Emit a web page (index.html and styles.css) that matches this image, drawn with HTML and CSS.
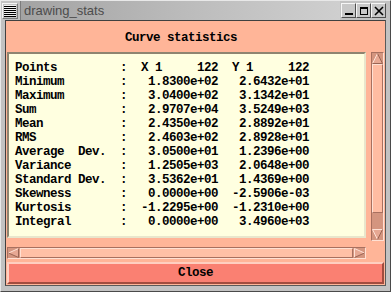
FILE: index.html
```html
<!DOCTYPE html>
<html>
<head>
<meta charset="utf-8">
<link rel="stylesheet" href="styles.css">
</head>
<body>
<div class="window">
  <div class="titlebar">
    <div class="menu-btn"></div>
    <div class="title-area"><span class="title">drawing_stats</span></div>
    <div class="wbtns">
      <div class="wbtn"><svg width="13" height="13" viewBox="0 0 13 13"><rect x="3" y="9" width="8" height="2" fill="#000"/></svg></div>
      <div class="wbtn"><svg width="13" height="13" viewBox="0 0 13 13"><rect x="3.5" y="3.5" width="7" height="7" fill="none" stroke="#000"/><rect x="3" y="3" width="8" height="2" fill="#000"/></svg></div>
      <div class="wbtn"><svg width="13" height="13" viewBox="0 0 13 13"><path d="M3 3 L11 11 M11 3 L3 11" stroke="#000" stroke-width="1.6"/></svg></div>
    </div>
  </div>
  <div class="frame">
    <div class="client">
      <div class="header">Curve statistics</div>
      <div class="mid">
<pre class="text">Points         :  X 1     122  Y 1     122
Minimum        :   1.8300e+02   2.6432e+01
Maximum        :   3.0400e+02   3.1342e+01
Sum            :   2.9707e+04   3.5249e+03
Mean           :   2.4350e+02   2.8892e+01
RMS            :   2.4603e+02   2.8928e+01
Average  Dev.  :   3.0500e+01   1.2396e+00
Variance       :   1.2505e+03   2.0648e+00
Standard Dev.  :   3.5362e+01   1.4369e+00
Skewness       :   0.0000e+00  -2.5906e-03
Kurtosis       :  -1.2295e+00  -1.2310e+00
Integral       :   0.0000e+00   3.4960e+03</pre>
        <div class="vscroll">
          <div class="arrow-v"><svg width="11" height="11" viewBox="0 0 11 11"><polygon points="5.5,0.5 0.5,10.5 10.5,10.5" fill="#e7a893"/><path d="M0.5 10.5 L5.5 0.5" stroke="#ffe2d6" fill="none"/><path d="M5.5 0.5 L10.5 10.5 L0.5 10.5" stroke="#9a6453" fill="none"/></svg></div>
          <div class="vthumb"></div>
          <div class="vspace"></div>
          <div class="arrow-v"><svg width="11" height="11" viewBox="0 0 11 11"><polygon points="0.5,0.5 10.5,0.5 5.5,10.5" fill="#e7a893"/><path d="M5.5 10.5 L0.5 0.5 L10.5 0.5" stroke="#ffe2d6" fill="none"/><path d="M10.5 0.5 L5.5 10.5" stroke="#9a6453" fill="none"/></svg></div>
        </div>
      </div>
      <div class="hscroll">
        <div class="arrow-h"><svg width="11" height="10" viewBox="0 0 11 10"><polygon points="0.5,5 10.5,0.5 10.5,9.5" fill="#e7a893"/><path d="M0.5 5 L10.5 0.5" stroke="#ffe2d6" fill="none"/><path d="M10.5 0.5 L10.5 9.5 L0.5 5" stroke="#9a6453" fill="none"/></svg></div>
        <div class="hthumb"></div>
        <div class="arrow-h"><svg width="11" height="10" viewBox="0 0 11 10"><polygon points="0.5,0.5 10.5,5 0.5,9.5" fill="#e7a893"/><path d="M0.5 9.5 L0.5 0.5 L10.5 5" stroke="#ffe2d6" fill="none"/><path d="M10.5 5 L0.5 9.5" stroke="#9a6453" fill="none"/></svg></div>
      </div>
      <div class="close-btn">Close</div>
    </div>
  </div>
</div>
</body>
</html>
```

FILE: styles.css
```css
html, body {
  margin: 0;
  padding: 0;
  background: #c2c2c2;
}

.window {
  width: 391px;
  height: 292px;
  box-sizing: border-box;
  background: #c2c2c2;
  border: 1px solid;
  border-color: #e8e8e8 #4a4a4a #4a4a4a #e8e8e8;
  display: flex;
  flex-direction: column;
}

.titlebar {
  height: 19px;
  display: flex;
  align-items: center;
  flex: none;
}

.menu-btn {
  width: 16px;
  height: 16px;
  box-sizing: border-box;
  margin-left: 1px;
  border: 1px solid;
  border-color: #f4f4f4 #7a7a7a #7a7a7a #f4f4f4;
  background: repeating-linear-gradient(to bottom, #000 0, #000 1px, #f0f0f0 1px, #f0f0f0 2px);
  background-clip: content-box;
  padding: 1px;
}

.title-area {
  flex: 1;
  height: 19px;
  margin-left: 2px;
  box-sizing: border-box;
  border-left: 1px solid #7c7c7c;
  background: linear-gradient(90deg, #a3a3a3 0%, #bdbdbd 55%, #cfcfcf 100%);
  display: flex;
  align-items: center;
  padding-left: 3px;
}

.title {
  font-family: "Liberation Sans", Arial, sans-serif;
  font-size: 13px;
  color: #4c4c4c;
}

.wbtns {
  display: flex;
  margin-left: 1px;
  margin-right: 4px;
}

.wbtn {
  width: 15px;
  height: 15px;
  box-sizing: border-box;
  border: 1px solid;
  border-color: #f6f6f6 #4e4e4e #4e4e4e #f6f6f6;
  background: #c8c8c8;
  display: flex;
  align-items: center;
  justify-content: center;
}

.frame {
  flex: 1;
  display: flex;
  padding: 0 4px 5px 4px;
}

.client {
  flex: 1;
  display: flex;
  flex-direction: column;
  box-sizing: border-box;
  border: 1px solid;
  border-color: #404040 #5a5a5a #5a5a5a #404040;
  background: #ffb598;
  padding: 1px;
  font-family: "Liberation Mono", "Courier New", monospace;
  font-weight: bold;
  font-size: 12.5px;
  letter-spacing: -0.5px;
  line-height: 14px;
  color: #000;
}

.header {
  height: 30px;
  box-sizing: border-box;
  padding: 9px 0 0 118px;
  white-space: pre;
}

.mid {
  display: flex;
  align-items: flex-start;
  gap: 5px;
  height: 189px;
}

.text {
  margin: 0;
  width: 359px;
  height: 186px;
  box-sizing: border-box;
  border: 2px solid;
  border-color: #8e8470 #e9e6cc #e9e6cc #8e8470;
  background: #ffffe0;
  padding: 7px 0 0 6px;
  font: inherit;
  letter-spacing: inherit;
  line-height: 14px;
  overflow: hidden;
}

.vscroll {
  width: 13px;
  height: 189px;
  box-sizing: border-box;
  border: 1px solid;
  border-color: #a8705f #ffe0d3 #ffe0d3 #a8705f;
  background: #d4957f;
  display: flex;
  flex-direction: column;
}

.arrow-v {
  height: 11px;
  display: flex;
  flex: none;
}

.vthumb {
  height: 149px;
  flex: none;
  box-sizing: border-box;
  border: 1px solid;
  border-color: #ffe0d3 #a8705f #a8705f #ffe0d3;
  background: #ffbca2;
}

.vspace {
  flex: 1;
}

.hscroll {
  margin-top: 6px;
  width: 359px;
  height: 12px;
  box-sizing: border-box;
  border: 1px solid;
  border-color: #a8705f #ffe0d3 #ffe0d3 #a8705f;
  background: #d4957f;
  display: flex;
}

.arrow-h {
  width: 11px;
  display: flex;
  align-items: center;
  flex: none;
}

.hthumb {
  flex: 1;
  margin-left: 1px;
  margin-right: 1px;
  box-sizing: border-box;
  border: 1px solid;
  border-color: #ffe0d3 #a8705f #a8705f #ffe0d3;
  background: #ffc0a6;
}

.close-btn {
  margin-top: 3px;
  height: 22px;
  box-sizing: border-box;
  border: 2px solid;
  border-color: #ffcfc0 #a24c3e #a24c3e #ffcfc0;
  background: #fa8072;
  display: flex;
  align-items: center;
  justify-content: center;
}
```
